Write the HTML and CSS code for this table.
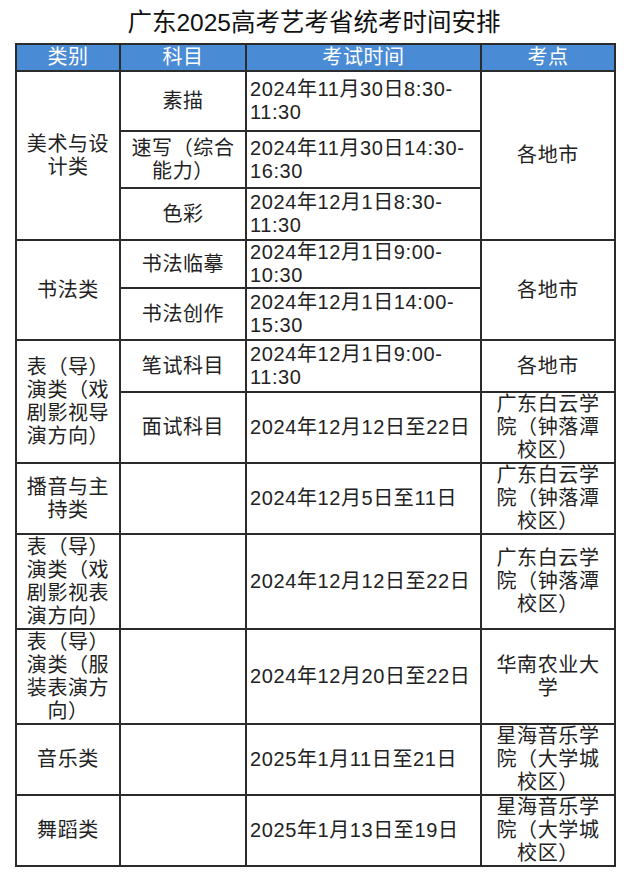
FILE: index.html
```html
<!DOCTYPE html>
<html lang="zh-CN">
<head>
<meta charset="utf-8">
<title>广东2025高考艺考省统考时间安排</title>
<link rel="stylesheet" href="styles.css">
</head>
<body>
<div class="page">
  <div class="title-bar"><h1 class="title">广东2025高考艺考省统考时间安排</h1></div>
  <table class="schedule">
    <colgroup>
      <col class="c1"><col class="c2"><col class="c3"><col class="c4">
    </colgroup>
    <thead>
      <tr class="h-head">
        <th>类别</th><th>科目</th><th>考试时间</th><th>考点</th>
      </tr>
    </thead>
    <tbody>
      <tr class="h60">
        <td rowspan="3" class="cat">美术与设<br>计类</td>
        <td class="subj">素描</td>
        <td class="time">2024年11月30日8:30-<br>11:30</td>
        <td rowspan="3" class="place">各地市</td>
      </tr>
      <tr class="h57">
        <td class="subj">速写（综合<br>能力）</td>
        <td class="time">2024年11月30日14:30-<br>16:30</td>
      </tr>
      <tr class="h52">
        <td class="subj">色彩</td>
        <td class="time">2024年12月1日8:30-<br>11:30</td>
      </tr>
      <tr class="h47">
        <td rowspan="2" class="cat">书法类</td>
        <td class="subj">书法临摹</td>
        <td class="time">2024年12月1日9:00-<br>10:30</td>
        <td rowspan="2" class="place">各地市</td>
      </tr>
      <tr class="h52">
        <td class="subj">书法创作</td>
        <td class="time">2024年12月1日14:00-<br>15:30</td>
      </tr>
      <tr class="h52">
        <td rowspan="2" class="cat">表（导）<br>演类（戏<br>剧影视导<br>演方向）</td>
        <td class="subj">笔试科目</td>
        <td class="time">2024年12月1日9:00-<br>11:30</td>
        <td class="place">各地市</td>
      </tr>
      <tr class="h71">
        <td class="subj">面试科目</td>
        <td class="time">2024年12月12日至22日</td>
        <td class="place">广东白云学<br>院（钟落潭<br>校区）</td>
      </tr>
      <tr class="h71">
        <td class="cat">播音与主<br>持类</td>
        <td class="subj"></td>
        <td class="time">2024年12月5日至11日</td>
        <td class="place">广东白云学<br>院（钟落潭<br>校区）</td>
      </tr>
      <tr class="h95">
        <td class="cat">表（导）<br>演类（戏<br>剧影视表<br>演方向）</td>
        <td class="subj"></td>
        <td class="time">2024年12月12日至22日</td>
        <td class="place">广东白云学<br>院（钟落潭<br>校区）</td>
      </tr>
      <tr class="h95">
        <td class="cat">表（导）<br>演类（服<br>装表演方<br>向）</td>
        <td class="subj"></td>
        <td class="time">2024年12月20日至22日</td>
        <td class="place">华南农业大<br>学</td>
      </tr>
      <tr class="h71">
        <td class="cat">音乐类</td>
        <td class="subj"></td>
        <td class="time">2025年1月11日至21日</td>
        <td class="place">星海音乐学<br>院（大学城<br>校区）</td>
      </tr>
      <tr class="h71">
        <td class="cat">舞蹈类</td>
        <td class="subj"></td>
        <td class="time">2025年1月13日至19日</td>
        <td class="place">星海音乐学<br>院（大学城<br>校区）</td>
      </tr>
    </tbody>
  </table>
</div>
</body>
</html>
```

FILE: styles.css
```css
html, body {
  margin: 0;
  padding: 0;
  background: #ffffff;
}

body {
  font-family: "Liberation Sans", "Noto Sans CJK SC", sans-serif;
  color: #222222;
}

.page {
  width: 628px;
}

.title-bar {
  height: 43px;
  display: flex;
  align-items: center;
  justify-content: center;
}

.title {
  margin: 0;
  padding-top: 3px;
  font-size: 24.5px;
  font-weight: normal;
  line-height: 1;
  color: #111111;
  white-space: nowrap;
}

.schedule {
  margin-left: 15px;
  width: 601px;
  border-collapse: collapse;
  table-layout: fixed;
  font-size: 20px;
  line-height: 23px;
  letter-spacing: 0.6px;
}

.c1 { width: 104px; }
.c2 { width: 126px; }
.c3 { width: 235px; }
.c4 { width: 134px; }

.schedule th,
.schedule td {
  border: 2px solid #2b2b2b;
  padding: 0;
  vertical-align: middle;
  font-weight: normal;
}

.schedule th {
  background: #4a8bd6;
  color: #ffffff;
  text-align: center;
  line-height: 23px;
}

.h-head { height: 27px; }
.h47 { height: 47px; }
.h52 { height: 52px; }
.h57 { height: 57px; }
.h60 { height: 60px; }
.h71 { height: 71px; }
.h95 { height: 95px; }

.cat,
.subj,
.place {
  text-align: center;
}

.time {
  text-align: left;
  padding-left: 3px !important;
  white-space: nowrap;
}
```
